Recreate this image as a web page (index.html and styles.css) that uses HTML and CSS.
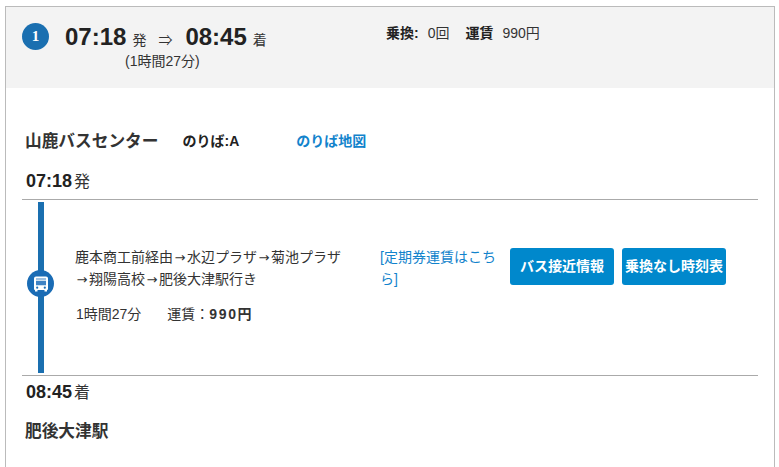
FILE: index.html
```html
<!DOCTYPE html>
<html lang="ja">
<head>
  <meta charset="UTF-8">
  <meta name="viewport" content="width=device-width, initial-scale=1.0">
  <title>経路詳細</title>
  <link rel="stylesheet" href="styles.css">
</head>
<body>
  <div class="route">
    <div class="summary">
      <span class="num">1</span>
      <div class="times">
        <div class="times-main">
          <b class="big">07:18</b><span class="unit">発</span>
          <span class="arrow">⇒</span>
          <b class="big">08:45</b><span class="unit">着</span>
        </div>
        <div class="duration">(1時間27分)</div>
      </div>
      <div class="facts">
        <b>乗換:</b><span class="fact-val">0回</span>
        <b>運賃</b><span>990円</span>
      </div>
    </div>

    <div class="stop first">
      <span class="stop-name">山鹿バスセンター</span>
      <b class="platform">のりば:A</b>
      <a class="map-link" href="#">のりば地図</a>
    </div>
    <div class="time-row"><b>07:18</b><span>発</span></div>

    <div class="leg">
      <div class="line">
        <span class="bus">
          <svg width="18" height="18" viewBox="0 0 18 18">
            <path fill="#fff" d="M4 1.500h10a2 2 0 0 1 2 2v10.500a1 1 0 0 1-1 1v1.500h-2.500V15h-7v1.500H3V15a1 1 0 0 1-1-1V3.500a2 2 0 0 1 2-2z"/>
            <path fill="#3f83c4" d="M4 3.500h10v1H4zM4 5.700h10v4.500H4z"/>
            <circle fill="#1a6cb5" cx="5.200" cy="12.700" r="1.100"/>
            <circle fill="#1a6cb5" cx="12.800" cy="12.700" r="1.100"/>
          </svg>
        </span>
      </div>
      <div class="leg-info">
        <p class="via">鹿本商工前経由<span class="to">→</span>水辺プラザ<span class="to">→</span>菊池プラザ<span class="to">→</span>翔陽高校<span class="to">→</span>肥後大津駅行き</p>
        <p class="cost"><span class="leg-time">1時間27分</span>運賃：<b class="fare">990円</b></p>
      </div>
      <a class="pass-link" href="#">[定期券運賃はこちら]</a>
      <div class="buttons">
        <a class="btn" href="#">バス接近情報</a>
        <a class="btn" href="#">乗換なし時刻表</a>
      </div>
    </div>

    <div class="time-row arrive"><b>08:45</b><span>着</span></div>
    <div class="stop last">
      <span class="stop-name">肥後大津駅</span>
    </div>
  </div>
</body>
</html>
```

FILE: styles.css
```css
html, body {
  height: 100%;
}
body {
  margin: 0;
  padding: 6px 4px 0 5px;
  box-sizing: border-box;
  overflow: hidden;
  font-family: "Liberation Sans", "Noto Sans CJK JP", sans-serif;
  font-size: 14px;
  color: #333;
  background: #fff;
}
a {
  text-decoration: none;
}
p {
  margin: 0;
}
.route {
  border: 1px solid #bbb;
  border-bottom: none;
  height: 100%;
}
.summary {
  display: flex;
  height: 81px;
  padding: 16px 0 0 16px;
  box-sizing: border-box;
  background: #f3f3f3;
}
.num {
  width: 27px;
  height: 27px;
  border-radius: 50%;
  background: #1a6fb0;
  color: #fff;
  font-family: "Liberation Serif", serif;
  font-weight: bold;
  font-size: 15px;
  line-height: 27px;
  text-align: center;
}
.times {
  margin-left: 16px;
  width: 321px;
}
.times-main {
  display: flex;
  align-items: baseline;
  height: 28px;
  line-height: 28px;
}
.big {
  font-size: 24px;
  color: #222;
}
.unit {
  margin-left: 6px;
  font-size: 14px;
}
.arrow {
  margin: 0 13px 0 12px;
  font-size: 14px;
}
.duration {
  margin: 0 0 0 60px;
  line-height: 20px;
}
.facts {
  display: flex;
  gap: 8px;
  height: 20px;
  line-height: 20px;
}
.facts b {
  color: #222;
}
.fact-val {
  margin-left: 1px;
  margin-right: 8px;
}
.facts span:last-child {
  margin-left: 1px;
}
.stop {
  padding-left: 19px;
  display: flex;
  align-items: center;
}
.stop.first {
  margin-top: 40px;
  height: 24px;
}
.stop-name {
  font-size: 16.7px;
  font-weight: bold;
}
.platform {
  margin-left: 24px;
  color: #222;
}
.map-link {
  margin-left: 57px;
  font-weight: bold;
  color: #1283cc;
}
.time-row {
  margin: 21px 16px 0 16px;
  padding: 0 0 9px 4px;
  height: 17px;
  line-height: 17px;
  font-size: 16px;
  border-bottom: 1px solid #aaa;
}
.time-row b {
  margin-right: 2px;
  font-size: 18px;
  color: #222;
}
.leg {
  display: flex;
  align-items: flex-start;
  height: 175px;
  margin: 0 16px;
  border-bottom: 1px solid #aaa;
}
.line {
  position: relative;
  width: 6px;
  height: 171px;
  margin: 2px 31px 0 16px;
  background: #1a6fb0;
}
.bus {
  position: absolute;
  left: -11px;
  top: 68px;
  width: 27px;
  height: 27px;
  border-radius: 50%;
  background: #1a6cb5;
  display: flex;
  align-items: center;
  justify-content: center;
}
.leg-info {
  width: 271px;
  margin: 46px 34px 0 0;
  line-height: 22px;
}
.via {
  margin-bottom: 13px;
}
.to {
  display: inline-block;
  width: 14px;
  line-height: 1;
  font-family: "DejaVu Sans", sans-serif;
  font-size: 13px;
  text-align: center;
}
.leg-time {
  margin-left: 1px;
  margin-right: 26px;
}
.fare {
  letter-spacing: 1.6px;
}
.pass-link {
  width: 120px;
  margin: 46px 10px 0 0;
  line-height: 22px;
  color: #1283cc;
}
.buttons {
  display: flex;
  gap: 8px;
  margin-top: 48px;
}
.btn {
  width: 104px;
  height: 37px;
  line-height: 37px;
  border-radius: 3px;
  background: #0088cc;
  color: #fff;
  font-weight: bold;
  text-align: center;
  white-space: nowrap;
}
.arrive {
  margin-top: 8px;
  padding-bottom: 0;
  border-bottom: none;
}
.stop.last {
  margin-top: 17px;
  height: 24px;
}
```
